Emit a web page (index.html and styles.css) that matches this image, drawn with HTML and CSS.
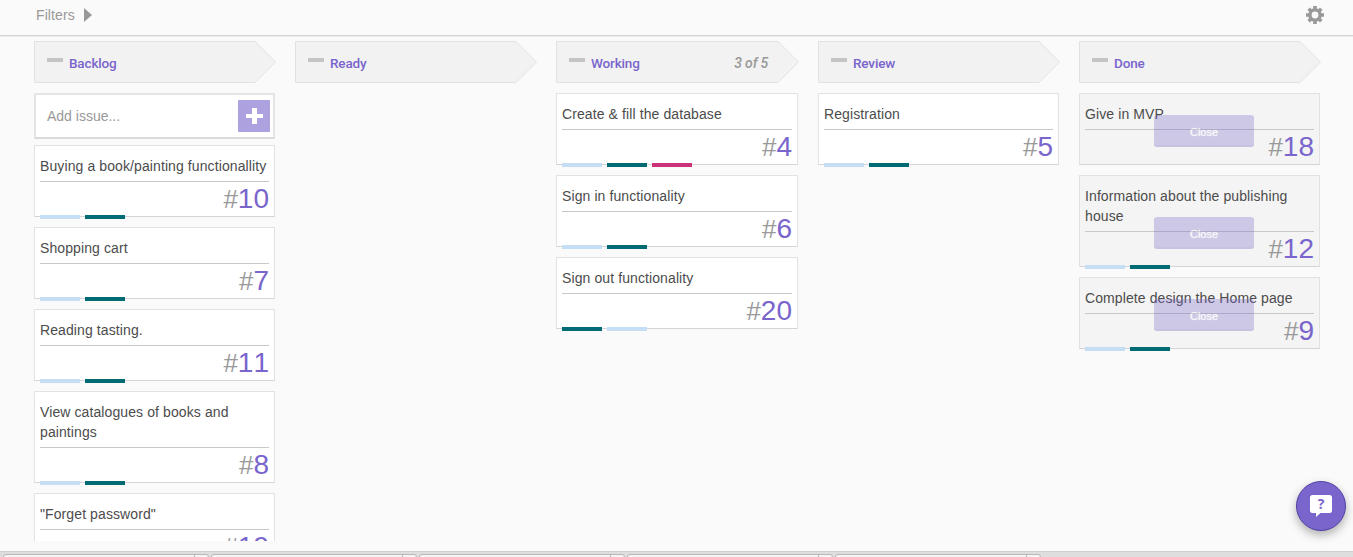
FILE: index.html
```
<!DOCTYPE html>
<html lang="en">
<head>
<meta charset="utf-8">
<title>Board</title>
<link rel="stylesheet" href="styles.css">
</head>
<body>
<div class="app">
  <header class="toolbar">
    <div class="filters">Filters <span class="caret"></span></div>
    <svg class="gear" viewBox="0 0 18 18"><g fill="none" stroke="#999"><circle cx="9" cy="9" r="5.100" stroke-width="3.400"/><path d="M9 0v3.500M9 14.500V18M0 9h3.500M14.500 9H18M2.700 2.700l2.500 2.500M12.800 12.800l2.500 2.500M2.700 15.300l2.500-2.500M12.800 5.200l2.500-2.500" stroke-width="3.600"/></g></svg>
  </header>
  <main class="board">
    <section class="column">
      <div class="head"><svg class="arrow" viewBox="0 0 243 42"><path d="M.5 .5H221L241.500 21L221 41.500H.5Z"/></svg><i class="dash"></i><h2>Backlog</h2></div>
      <div class="add"><span>Add issue...</span><button class="plus" aria-label="Add"></button></div>
      <article class="card"><p>Buying a book/painting functionallity</p><div class="num"><small>#</small>10</div><div class="tags"><i class="sky"></i><i class="teal"></i></div></article>
      <article class="card"><p>Shopping cart</p><div class="num"><small>#</small>7</div><div class="tags"><i class="sky"></i><i class="teal"></i></div></article>
      <article class="card"><p>Reading tasting.</p><div class="num"><small>#</small>11</div><div class="tags"><i class="sky"></i><i class="teal"></i></div></article>
      <article class="card"><p>View catalogues of books and paintings</p><div class="num"><small>#</small>8</div><div class="tags"><i class="sky"></i><i class="teal"></i></div></article>
      <article class="card"><p>"Forget password"</p><div class="num"><small>#</small>19</div></article>
    </section>
    <section class="column">
      <div class="head"><svg class="arrow" viewBox="0 0 243 42"><path d="M.5 .5H221L241.500 21L221 41.500H.5Z"/></svg><i class="dash"></i><h2>Ready</h2></div>
    </section>
    <section class="column">
      <div class="head"><svg class="arrow" viewBox="0 0 243 42"><path d="M.5 .5H222L242.500 21L222 41.500H.5Z"/></svg><i class="dash"></i><h2>Working</h2><em>3 of 5</em></div>
      <article class="card"><p>Create &amp; fill the database</p><div class="num"><small>#</small>4</div><div class="tags"><i class="sky"></i><i class="teal"></i><i class="pink"></i></div></article>
      <article class="card"><p>Sign in functionality</p><div class="num"><small>#</small>6</div><div class="tags"><i class="sky"></i><i class="teal"></i></div></article>
      <article class="card"><p>Sign out functionality</p><div class="num"><small>#</small>20</div><div class="tags"><i class="teal"></i><i class="sky"></i></div></article>
    </section>
    <section class="column">
      <div class="head"><svg class="arrow" viewBox="0 0 243 42"><path d="M.5 .5H221L241.500 21L221 41.500H.5Z"/></svg><i class="dash"></i><h2>Review</h2></div>
      <article class="card"><p>Registration</p><div class="num"><small>#</small>5</div><div class="tags"><i class="sky"></i><i class="teal"></i></div></article>
    </section>
    <section class="column">
      <div class="head"><svg class="arrow" viewBox="0 0 243 42"><path d="M.5 .5H221L241.500 21L221 41.500H.5Z"/></svg><i class="dash"></i><h2>Done</h2></div>
      <article class="card done"><p>Give in MVP</p><div class="num"><small>#</small>18</div><button class="close">Close</button></article>
      <article class="card done"><p>Information about the publishing house</p><div class="num"><small>#</small>12</div><div class="tags"><i class="sky"></i><i class="teal"></i></div><button class="close">Close</button></article>
      <article class="card done"><p>Complete design the Home page</p><div class="num"><small>#</small>9</div><div class="tags"><i class="sky"></i><i class="teal"></i></div><button class="close">Close</button></article>
    </section>
  </main>
  <footer class="shelf"><div class="tab"></div><div class="tab"></div><div class="tab"></div><div class="tab"></div><div class="tab"></div></footer>
  <div class="help"><svg viewBox="0 0 22 22"><path d="M2.500 0h17a2.500 2.500 0 0 1 2.500 2.500v13a2.500 2.500 0 0 1-2.500 2.500H10.500L6 22V18H2.500A2.500 2.500 0 0 1 0 15.500v-13A2.500 2.500 0 0 1 2.500 0Z" fill="#fff"/></svg><b>?</b></div>
</div>
</body>
</html>
```
FILE: styles.css
```
* { box-sizing: border-box; }
body { margin: 0; background: #fafafa; font: 14px/20px "Liberation Sans", Arial, sans-serif; color: #4c4c4c; overflow: hidden; }
.app { height: 557px; display: flex; flex-direction: column; }
.toolbar { height: 37px; flex: none; display: flex; justify-content: space-between; padding: 5px 29px 0 36px; border-bottom: 1px solid #ececec; box-shadow: inset 0 -1px #d4d4d4; color: #999; }
.filters { display: flex; gap: 9px; height: 20px; align-items: center; letter-spacing: .1px; }
.caret { border-left: 8px solid #999; border-top: 7px solid transparent; border-bottom: 7px solid transparent; }
.gear { width: 18px; height: 18px; margin-top: 1px; }
.board { height: 504px; flex: none; overflow: hidden; padding: 4px 33px 0 34px; display: grid; grid-template-columns: 241px 241px 242px 241px 241px; column-gap: 20px; }
.column { display: flex; flex-direction: column; align-items: flex-start; gap: 10px; min-width: 0; }
.head { position: relative; width: 242px; height: 42px; flex: none; display: flex; align-items: center; padding: 1px 30px 0 13px; }
.arrow { position: absolute; left: 0; top: 0; width: 243px; height: 42px; fill: #f2f2f2; stroke: #e2e2e2; }
.column:nth-child(3) .card { width: 242px; }
.dash { position: relative; width: 16px; height: 4px; background: #c4c4c4; margin: -5px 6px 0 0; }
h2 { position: relative; margin: 0; font: 500 13.5px/20px Roboto, sans-serif; letter-spacing: -.15px; color: #7965cc; }
.head em { position: relative; margin-left: auto; font: italic 500 14px/20px Roboto, sans-serif; letter-spacing: -.2px; color: #999; }
.add { width: 241px; height: 46px; flex: none; margin-bottom: -4px; border: 2px solid #e5e5e5; border-bottom-color: #dadada; background: #fff; display: flex; align-items: center; justify-content: space-between; padding: 0 3px 0 11px; color: #999; }
.plus { width: 32px; height: 32px; border: 0; border-radius: 1px; background: linear-gradient(#fff, #fff) center / 17px 4px no-repeat, linear-gradient(#fff, #fff) center / 5px 16px no-repeat, #ada1df; }
.card { position: relative; width: 241px; flex: none; border: 1px solid #e2e2e2; border-bottom-color: #d4d4d4; background: #fff; padding: 10px 5px 0; }
.card p { margin: 0; padding-bottom: 5px; border-bottom: 1px solid #c8c8c8; letter-spacing: .1px; }
.num { height: 34px; text-align: right; font-size: 28px; line-height: 34px; font-kerning: none; color: #7965cc; }
.num small { font-size: 26px; color: #999; }
.tags { position: absolute; left: 5px; bottom: -3px; display: flex; gap: 5px; }
.tags i { width: 40px; height: 4px; }
.sky { background: #c5def5; }
.teal { background: #006b75; }
.pink { background: #cc317c; }
.done { background: #f4f4f4; }
.close { position: absolute; left: 74px; bottom: 17px; width: 100px; height: 32px; border: 0; border-bottom: 2px solid #6652b8; border-radius: 3px; background: #7965cc; color: #fff; opacity: .3; font: 11px/14px "Liberation Sans", Arial, sans-serif; text-shadow: 0 0 1px #fff; padding: 3px 0 0; }
.shelf { margin-top: auto; height: 6px; background: #dedede; border-top: 1px solid #cecece; display: flex; gap: 2px; padding: 2px 3px 0; overflow: hidden; }
.tab { width: 206px; flex: none; height: 20px; border: 1px solid #b8b8b8; border-radius: 3px; background: linear-gradient(90deg, #f5f5f5 190px, #b8b8b8 190px, #b8b8b8 191px, #f5f5f5 191px); }
.help { position: absolute; left: 1296px; top: 481px; width: 50px; height: 50px; border: 1px solid #5340a5; border-radius: 50%; background: #7965cc; box-shadow: 0 4px 10px rgba(0,0,0,.3); display: grid; place-items: center; }
.help svg { width: 22px; height: 22px; grid-area: 1 / 1; }
.help b { grid-area: 1 / 1; margin-top: -5px; font: bold 14px/18px "Open Sans", sans-serif; color: #7965cc; }
```
